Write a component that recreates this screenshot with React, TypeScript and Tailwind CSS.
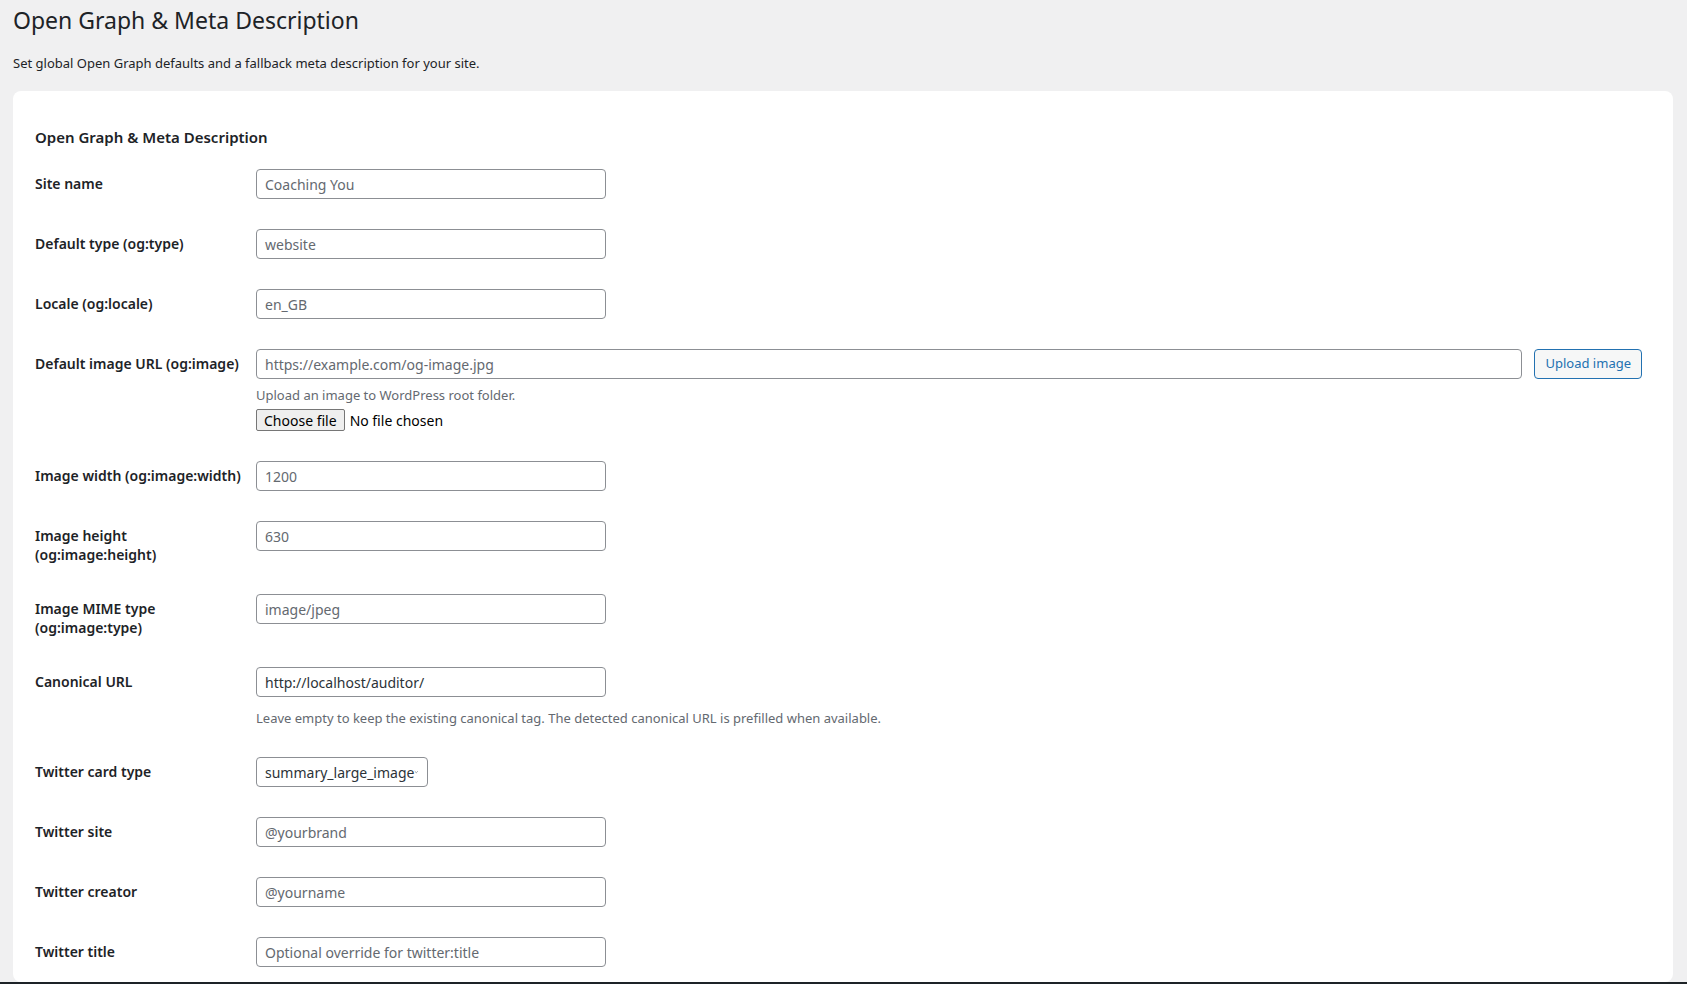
import React from "react";

const F = { fontFamily: '"Noto Sans", "Open Sans", "Liberation Sans", sans-serif' };

function Input({ value, placeholder, w = "w-[350px]" }: { value?: string; placeholder?: string; w?: string }) {
  return (
    <div className={`${w} h-[30px] border border-[#8c8f94] rounded-[4px] bg-white flex items-center px-[8px] text-[14px] ${value ? "text-[#2c3338]" : "text-[#646970]"}`}>
      {value ?? placeholder}
    </div>
  );
}

function Row({ label, children }: { label: React.ReactNode; children: React.ReactNode }) {
  return (
    <div className="flex py-[15px]">
      <div className="w-[221px] shrink-0 pt-[5px] text-[14px] leading-[19px] font-semibold text-[#1d2327]">{label}</div>
      <div className="flex-1 flex flex-col">{children}</div>
    </div>
  );
}

export default function App() {
  return (
    <div style={F} className="h-[984px] overflow-hidden flex flex-col bg-[#f0f0f1]">
      <div className="flex-1 overflow-hidden px-[13px]">
        <h1 className="text-[23px] font-normal text-[#1d2327] pt-[6px] leading-[28px]">Open Graph &amp; Meta Description</h1>
        <p className="text-[13px] text-[#1d2327] mt-[20px] leading-[18px]">Set global Open Graph defaults and a fallback meta description for your site.</p>
        <div className="mt-[19px] bg-white rounded-[8px] mr-[1px] px-[22px] pt-[36px]">
          <h2 className="text-[15px] font-semibold text-[#1d2327] leading-[20px] mb-[7px]">Open Graph &amp; Meta Description</h2>
          <Row label="Site name"><Input placeholder="Coaching You" /></Row>
          <Row label="Default type (og:type)"><Input placeholder="website" /></Row>
          <Row label="Locale (og:locale)"><Input placeholder="en_GB" /></Row>
          <Row label="Default image URL (og:image)">
            <div className="flex items-center gap-[12px]">
              <div className="flex-1"><Input w="w-full" placeholder="https://example.com/og-image.jpg" /></div>
              <button className="h-[30px] px-[10px] border border-[#2271b1] rounded-[4px] bg-[#f6f7f7] text-[#2271b1] text-[13px] mr-[9px]">Upload image</button>
            </div>
            <div className="text-[13px] text-[#646970] mt-[7px] leading-[18px]">Upload an image to WordPress root folder.</div>
            <div className="flex items-center mt-[5px] text-[14px] text-black">
              <span className="border border-[#767676] bg-[#efefef] rounded-[2px] px-[7px] h-[22px] flex items-center">Choose file</span>
              <span className="ml-[5px]">No file chosen</span>
            </div>
          </Row>
          <Row label="Image width (og:image:width)"><Input placeholder="1200" /></Row>
          <Row label={<>Image height<br />(og:image:height)</>}><Input placeholder="630" /></Row>
          <Row label={<>Image MIME type<br />(og:image:type)</>}><Input placeholder="image/jpeg" /></Row>
          <Row label="Canonical URL">
            <Input value="http://localhost/auditor/" />
            <div className="text-[13px] text-[#646970] mt-[12px] leading-[18px]">Leave empty to keep the existing canonical tag. The detected canonical URL is prefilled when available.</div>
          </Row>
          <Row label="Twitter card type">
            <div className="w-[172px] h-[30px] border border-[#8c8f94] rounded-[4px] flex items-center justify-between px-[8px] text-[14px] text-[#2c3338]">
              summary_large_image
              <svg width="12" height="12" viewBox="0 0 12 12" fill="none" stroke="#50575e" strokeWidth="1.5"><path d="M2 4l4 4 4-4" /></svg>
            </div>
          </Row>
          <Row label="Twitter site"><Input placeholder="@yourbrand" /></Row>
          <Row label="Twitter creator"><Input placeholder="@yourname" /></Row>
          <Row label="Twitter title"><Input placeholder="Optional override for twitter:title" /></Row>
        </div>
      </div>
      <div className="h-[2px] bg-[#1d2327]" />
    </div>
  );
}
